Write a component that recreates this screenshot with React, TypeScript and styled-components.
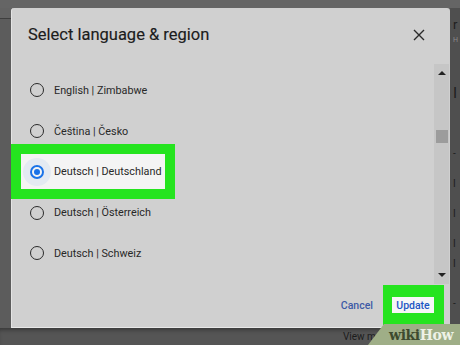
import React from "react";
import styled, { createGlobalStyle } from "styled-components";

const GlobalStyle = createGlobalStyle`
  html, body { margin: 0; padding: 0; background: #5a5a5a; }
  body { font-family: Roboto, "Liberation Sans", sans-serif; }
`;

const Screen = styled.div`
  position: relative;
  width: 460px;
  height: 345px;
  overflow: hidden;
  display: grid;
  grid-template-columns: 11px 439px 10px;
  grid-template-rows: 8px 320px 17px;
  background: #5a5a5a;
`;

const TopStrip = styled.div`
  grid-column: 1 / 4;
  grid-row: 1;
  background: #656565;
`;

const LeftGutter = styled.div`
  grid-column: 1;
  grid-row: 2;
  background: #5c5c5c;
  border-top: 10px solid #636363;
  box-sizing: border-box;
  &::before {
    content: "";
    display: block;
    height: 1px;
    background: #3e3e3e;
  }
`;

const RightGutter = styled.div`
  grid-column: 3;
  grid-row: 2;
  background: #4f4f4f;
  display: flex;
  flex-direction: column;
  padding: 6px 0 0 3px;
  overflow: hidden;
  color: #222;
`;

const Frag = styled.span<{ $size: number; $mt: number; $color?: string }>`
  font-size: ${(p) => p.$size}px;
  margin-top: ${(p) => p.$mt}px;
  line-height: 1;
  color: ${(p) => p.$color || "#1e1e1e"};
  white-space: nowrap;
`;

const BottomStrip = styled.div`
  grid-column: 1 / 4;
  grid-row: 3;
  background: #555;
  display: flex;
  align-items: center;
  padding-left: 343px;
  font-size: 10px;
  color: #1c1c1c;
  box-shadow: inset 0 4px 4px -2px rgba(0, 0, 0, 0.35);
`;

const Dialog = styled.div`
  grid-column: 2;
  grid-row: 2;
  background: #d0d0d0;
  display: flex;
  flex-direction: column;
  border-left: 1px solid #e4e4e4;
  border-bottom: 1px solid #e8e8e8;
  border-radius: 3px 3px 0 0;
  box-sizing: border-box;
`;

const Header = styled.div`
  height: 53px;
  flex: none;
  display: flex;
  align-items: center;
  justify-content: space-between;
  padding: 0 25px 3px 16px;
`;

const Title = styled.h1`
  margin: 0;
  font-family: Roboto, "Liberation Sans", sans-serif;
  font-weight: 400;
  font-size: 16.5px;
  color: #1c1c1c;
  -webkit-text-stroke: 0.15px #1c1c1c;
`;

const CloseBtn = styled.button`
  border: 0;
  background: transparent;
  padding: 0;
  width: 12px;
  height: 12px;
  display: flex;
  cursor: pointer;
`;

const Body = styled.div`
  height: 220px;
  flex: none;
  display: flex;
`;

const List = styled.div`
  flex: 1;
  display: flex;
  flex-direction: column;
  padding-top: 6px;
`;

const Row = styled.div`
  height: 40.75px;
  flex: none;
  display: flex;
  align-items: center;
  padding-left: 18px;
`;

const HighlightRow = styled.div`
  height: 40.75px;
  flex: none;
  display: flex;
  align-items: center;
  margin-left: -1px;
`;

const GreenBox = styled.div`
  height: 55px;
  flex: none;
  box-sizing: border-box;
  border: 10px solid #25e41f;
  background: #f4f4f4;
  display: flex;
  align-items: center;
  padding: 0 4px 0 9px;
`;

const Radio = styled.span<{ $checked?: boolean }>`
  width: 14px;
  height: 14px;
  flex: none;
  box-sizing: border-box;
  border-radius: 50%;
  border: ${(p) => (p.$checked ? "2px solid #1a73e8" : "1.5px solid #2a2a2a")};
  display: flex;
  align-items: center;
  justify-content: center;
  box-shadow: ${(p) => (p.$checked ? "0 0 0 7px rgba(26,115,232,0.07)" : "none")};
  &::after {
    content: "";
    width: 6px;
    height: 6px;
    border-radius: 50%;
    background: ${(p) => (p.$checked ? "#1a73e8" : "transparent")};
  }
`;

const Label = styled.span`
  margin-left: 10px;
  font-size: 10.8px;
  color: #282828;
  white-space: nowrap;
`;

const Scrollbar = styled.div`
  width: 15px;
  flex: none;
  margin-right: 1px;
  background: #c6c6c6;
  display: flex;
  flex-direction: column;
  align-items: center;
`;

const Arrow = styled.span<{ $down?: boolean }>`
  width: 0;
  height: 0;
  margin-top: ${(p) => (p.$down ? "auto" : "7px")};
  margin-bottom: ${(p) => (p.$down ? "7px" : "0")};
  border-left: 4px solid transparent;
  border-right: 4px solid transparent;
  ${(p) => (p.$down ? "border-top: 4px solid #222;" : "border-bottom: 4px solid #222;")}
`;

const Thumb = styled.span`
  width: 12px;
  height: 13px;
  background: #9c9c9c;
  margin-top: 55px;
`;

const Footer = styled.div`
  flex: 1;
  display: flex;
  align-items: center;
  justify-content: flex-end;
  padding: 0 6px 0 0;
`;

const TextButton = styled.button`
  border: 0;
  background: transparent;
  padding: 0;
  font-family: Roboto, "Liberation Sans", sans-serif;
  font-weight: 500;
  font-size: 10.5px;
  color: #3d5aa6;
  cursor: pointer;
`;

const UpdateFrame = styled.div`
  margin-left: 10px;
  margin-bottom: 1px;
  box-sizing: border-box;
  width: 61px;
  height: 40px;
  border-style: solid;
  border-color: #25e41f;
  border-width: 12px 10px 12px 9px;
  background: #f6f6f6;
  display: flex;
  align-items: center;
  justify-content: center;
`;

const UpdateText = styled(TextButton)`
  color: #1d55c4;
`;

const Watermark = styled.div`
  position: absolute;
  right: 0;
  bottom: 0;
  width: 92px;
  height: 21px;
  background: #9fae87;
  clip-path: polygon(16px 0, 100% 0, 100% 100%, 0 100%);
  display: flex;
  align-items: center;
  padding-left: 21px;
  box-sizing: border-box;
  font-family: "DejaVu Serif", "Liberation Serif", serif;
  font-weight: 700;
  font-size: 14px;
  letter-spacing: -0.4px;
`;

const Wiki = styled.span`
  color: #3d4a2e;
`;

const How = styled.span`
  color: #eef2e6;
`;

const items = [
  "English | Zimbabwe",
  "Čeština | Česko",
  "Deutsch | Deutschland",
  "Deutsch | Österreich",
  "Deutsch | Schweiz",
];

export default function App() {
  return (
    <>
      <GlobalStyle />
      <Screen>
        <TopStrip />
        <LeftGutter />
        <Dialog>
          <Header>
            <Title>Select language &amp; region</Title>
            <CloseBtn aria-label="Close">
              <svg width="12" height="12" viewBox="0 0 12 12">
                <path d="M1 1L11 11M11 1L1 11" stroke="#2a2a2a" strokeWidth="1.4" />
              </svg>
            </CloseBtn>
          </Header>
          <Body>
            <List>
              {items.map((t, i) =>
                i === 2 ? (
                  <HighlightRow key={t}>
                    <GreenBox>
                      <Radio $checked />
                      <Label>{t}</Label>
                    </GreenBox>
                  </HighlightRow>
                ) : (
                  <Row key={t}>
                    <Radio />
                    <Label>{t}</Label>
                  </Row>
                )
              )}
            </List>
            <Scrollbar>
              <Arrow />
              <Thumb />
              <Arrow $down />
            </Scrollbar>
          </Body>
          <Footer>
            <TextButton>Cancel</TextButton>
            <UpdateFrame>
              <UpdateText>Update</UpdateText>
            </UpdateFrame>
          </Footer>
        </Dialog>
        <RightGutter>
          <Frag $size={13} $mt={4}>r</Frag>
          <Frag $size={7} $mt={6} $color="#8a8a8a">H</Frag>
          <Frag $size={15} $mt={42}>I</Frag>
          <Frag $size={10} $mt={48}>-</Frag>
          <Frag $size={10} $mt={20}>I</Frag>
          <Frag $size={10} $mt={20}>I</Frag>
          <Frag $size={10} $mt={20}>I</Frag>
          <Frag $size={10} $mt={10}>I</Frag>
          <Frag $size={10} $mt={30}>-</Frag>
        </RightGutter>
        <BottomStrip>View more</BottomStrip>
        <Watermark>
          <Wiki>wiki</Wiki>
          <How>How</How>
        </Watermark>
      </Screen>
    </>
  );
}
